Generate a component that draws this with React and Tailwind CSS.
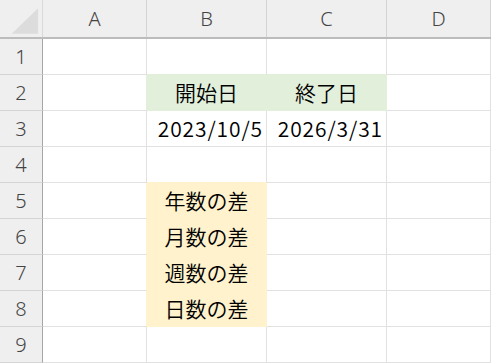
import React from "react";

const cols = ["A", "B", "C", "D"];
const colW = ["w-[104px]", "w-[120px]", "w-[120px]", "w-[104px]"];

const GREEN = new Set(["B2", "C2"]);
const YELLOW = new Set(["B5", "B6", "B7", "B8"]);

const content = {
  B2: { t: "開始日", a: "c" },
  C2: { t: "終了日", a: "c" },
  B3: { t: "2023/10/5", a: "r" },
  C3: { t: "2026/3/31", a: "r" },
  B5: { t: "年数の差", a: "c" },
  B6: { t: "月数の差", a: "c" },
  B7: { t: "週数の差", a: "c" },
  B8: { t: "日数の差", a: "c" },
};

function fillOf(id) {
  if (GREEN.has(id)) return "g";
  if (YELLOW.has(id)) return "y";
  return null;
}

function Cell({ ci, r }) {
  const id = cols[ci] + r;
  const f = fillOf(id);
  const right = ci < 3 ? cols[ci + 1] + r : null;
  const below = cols[ci] + (r + 1);
  const fr = f || (right && fillOf(right));
  const fb = f || fillOf(below);
  const bg = f === "g" ? "bg-[#e2efda]" : f === "y" ? "bg-[#fff2cc]" : "bg-white";
  const br =
    fr === "g" ? "border-r-[#e2efda]" : fr === "y" ? "border-r-[#fff2cc]" : "border-r-[#e1e1e1]";
  const bb =
    fb === "g" ? "border-b-[#e2efda]" : fb === "y" ? "border-b-[#fff2cc]" : "border-b-[#e1e1e1]";
  const c = content[id];
  const align = c && c.a === "r" ? "justify-end pr-[3px] tracking-[0.9px]" : "justify-center";
  return (
    <div
      className={`${colW[ci]} shrink-0 h-[36px] border-r border-b ${br} ${bb} ${bg} flex items-center ${align} text-[21px] font-[350] text-black leading-none`}
      style={{ fontFamily: '"Noto Sans CJK JP", "Noto Sans", sans-serif' }}
    >
      {c ? c.t : null}
    </div>
  );
}

export default function App() {
  const rows = [1, 2, 3, 4, 5, 6, 7, 8, 9];
  const hdrFont = { fontFamily: '"Noto Sans", "Noto Sans CJK JP", sans-serif' };
  return (
    <div className="w-[491px] h-[363px] overflow-hidden bg-white">
      <div className="flex h-[39px] bg-[#efefef] border-b-2 border-b-[#bcbcbc]">
        <div className="w-[43px] shrink-0 h-full border-r border-r-[#dadada] flex items-center justify-center">
          <svg width="43" height="37" viewBox="0 0 43 37">
            <polygon points="39,8 39,34 12,34" fill="#dcdcdc" />
          </svg>
        </div>
        {cols.map((c, i) => (
          <div
            key={c}
            className={`${colW[i]} shrink-0 h-full border-r border-r-[#d4d4d4] flex items-center justify-center text-[20px] font-light text-[#444]`}
            style={hdrFont}
          >
            {c}
          </div>
        ))}
      </div>
      {rows.map((r) => (
        <div key={r} className="flex">
          <div
            className="w-[43px] shrink-0 h-[36px] bg-[#efefef] border-r border-r-[#a6a6a6] border-b border-b-[#d4d4d4] flex items-center justify-center text-[20px] font-light text-[#444]"
            style={hdrFont}
          >
            {r}
          </div>
          {cols.map((c, ci) => (
            <Cell key={c} ci={ci} r={r} />
          ))}
        </div>
      ))}
    </div>
  );
}
